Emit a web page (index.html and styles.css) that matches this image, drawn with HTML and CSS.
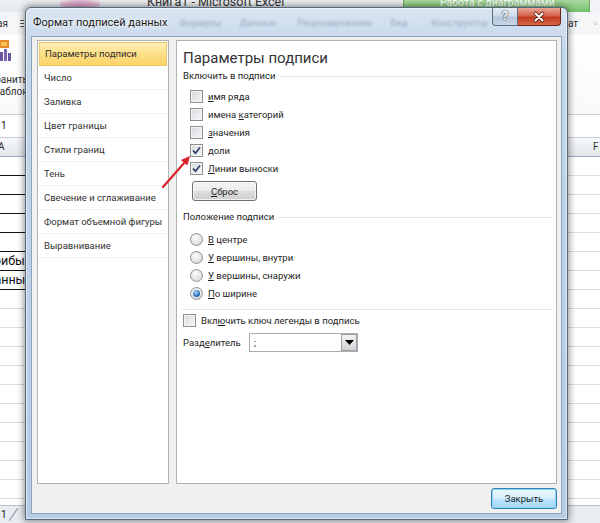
FILE: index.html
```html
<!DOCTYPE html>
<html lang="ru">
<head>
<meta charset="utf-8">
<link rel="stylesheet" href="styles.css">
</head>
<body>
<div class="excel">
  <div class="xl-top">
    <div class="xl-pink"></div>
    <div class="xl-caption"><span>Книга1 - Microsoft Excel</span></div>
    <div class="xl-tools"><span>Работа с диаграммами</span></div>
    <div class="xl-topend"></div>
  </div>
  <div class="row xl-tabs">
    <div class="l tabs-l"><span class="clip-end"><span>Главная</span></span><span class="tab-ico"></span></div>
    <div class="mid"></div>
    <div class="r"><span class="tab-r">ат</span><span class="tab-r2">◦</span></div>
  </div>
  <div class="row xl-ribbon">
    <div class="l rib-l">
      <svg class="rib-ico" width="13" height="22" viewBox="0 0 13 22"><rect x="0" y="0" width="9" height="8" fill="#e8892c"/><rect x="1" y="2" width="6" height="4" fill="#f6c04a"/><rect x="0" y="12" width="3" height="9" fill="#6d52a0"/><rect x="4" y="9" width="3" height="12" fill="#7f63b3"/><rect x="8" y="13" width="3" height="8" fill="#6d52a0"/></svg>
      <span class="rib-t">Сохранить</span>
      <span class="rib-t">как шаблон</span>
    </div>
    <div class="mid"></div>
    <div class="r"></div>
  </div>
  <div class="row xl-formula">
    <div class="l"><span class="nb">1</span></div>
    <div class="mid"></div>
    <div class="r"></div>
  </div>
  <div class="row xl-head">
    <div class="l"><span class="colh">A</span></div>
    <div class="mid"></div>
    <div class="r"><span class="colh-r">F</span></div>
  </div>
  <div class="xl-rows">
    <div class="row cell"><div class="l dark"></div><div class="mid"></div><div class="r"></div></div>
    <div class="row cell"><div class="l dark"></div><div class="mid"></div><div class="r"></div></div>
    <div class="row cell"><div class="l dark"></div><div class="mid"></div><div class="r"></div></div>
    <div class="row cell"><div class="l dark"></div><div class="mid"></div><div class="r"></div></div>
    <div class="row cell"><div class="l dark"></div><div class="mid"></div><div class="r"></div></div>
    <div class="row cell"><div class="l dark"><span class="ct ct1">Прибыль</span></div><div class="mid"></div><div class="r"></div></div>
    <div class="row cell"><div class="l dark"><span class="ct ct2">Данные</span></div><div class="mid"></div><div class="r"></div></div>
    <div class="row cell"><div class="l"></div><div class="mid"></div><div class="r"></div></div>
    <div class="row cell"><div class="l"></div><div class="mid"></div><div class="r"></div></div>
    <div class="row cell"><div class="l"></div><div class="mid"></div><div class="r"></div></div>
    <div class="row cell"><div class="l"></div><div class="mid"></div><div class="r"></div></div>
    <div class="row cell"><div class="l"></div><div class="mid"></div><div class="r"></div></div>
    <div class="row cell"><div class="l"></div><div class="mid"></div><div class="r"></div></div>
    <div class="row cell"><div class="l"></div><div class="mid"></div><div class="r"></div></div>
    <div class="row cell"><div class="l"></div><div class="mid"></div><div class="r"></div></div>
    <div class="row cell"><div class="l"></div><div class="mid"></div><div class="r"></div></div>
    <div class="row cell"><div class="l"></div><div class="mid"></div><div class="r"></div></div>
    <div class="row cell"><div class="l"></div><div class="mid"></div><div class="r"></div></div>
    <div class="row cell"><div class="l"></div><div class="mid"></div><div class="r"></div></div>
  </div>
  <div class="row xl-sheets">
    <div class="l sheet-l"><span class="sh">1</span><span class="sh-slash"></span></div>
    <div class="mid"></div>
    <div class="r"></div>
  </div>
</div>

<div class="dlg">
  <div class="titlebar">
    <span class="title">Формат подписей данных</span>
    <span class="glass">
      <span class="g1">Формулы</span>
      <span class="g2">Данные</span>
      <span class="g3">Рецензирование</span>
      <span class="g4">Вид</span>
      <span class="g5">Конструктор</span>
    </span>
    <span class="capbtns">
      <span class="help">?</span>
      <span class="close"><svg width="14" height="12" viewBox="0 0 14 12"><path d="M3.5 2.5 L10.5 9.5 M10.5 2.5 L3.5 9.5" stroke="#5a1d12" stroke-width="3.6" stroke-linecap="round"/><path d="M3.5 2.5 L10.5 9.5 M10.5 2.5 L3.5 9.5" stroke="#ffffff" stroke-width="2" stroke-linecap="round"/></svg></span>
    </span>
  </div>
  <div class="client">
    <div class="panels">
      <ul class="nav">
        <li class="sel">Параметры подписи</li>
        <li>Число</li>
        <li>Заливка</li>
        <li>Цвет границы</li>
        <li>Стили границ</li>
        <li>Тень</li>
        <li>Свечение и сглаживание</li>
        <li>Формат объемной фигуры</li>
        <li>Выравнивание</li>
      </ul>
      <div class="pane">
        <h1 class="heading">Параметры подписи</h1>
        <div class="group">Включить в подписи</div>
        <div class="opts">
          <label class="opt"><span class="cb"></span><span><u>и</u>мя ряда</span></label>
          <label class="opt"><span class="cb"></span><span>имена <u>к</u>атегорий</span></label>
          <label class="opt"><span class="cb"></span><span><u>з</u>начения</span></label>
          <label class="opt"><span class="cb"><svg width="11" height="11" viewBox="0 0 11 11"><path d="M2 5.5 L4.5 8.2 L9 2.5" fill="none" stroke="#283f6a" stroke-width="1.7"/></svg></span><span>доли</span></label>
          <label class="opt"><span class="cb"><svg width="11" height="11" viewBox="0 0 11 11"><path d="M2 5.5 L4.5 8.2 L9 2.5" fill="none" stroke="#283f6a" stroke-width="1.7"/></svg></span><span><u>Л</u>инии выноски</span></label>
        </div>
        <button class="btn reset" type="button"><u>С</u>брос</button>
        <div class="group group2">Положение подписи</div>
        <div class="opts radios">
          <label class="opt"><span class="rb"></span><span><u>В</u> центре</span></label>
          <label class="opt"><span class="rb"></span><span><u>У</u> вершины, внутри</span></label>
          <label class="opt"><span class="rb"></span><span><u>У</u> вершины, снаружи</span></label>
          <label class="opt"><span class="rb on"></span><span><u>П</u>о ширине</span></label>
        </div>
        <div class="sep"></div>
        <label class="opt legend"><span class="cb"></span><span>Вкл<u>ю</u>чить ключ легенды в подпись</span></label>
        <div class="delim">
          <span class="delim-l">Разд<u>е</u>литель</span>
          <span class="select"><span class="sel-v">;</span><span class="sel-b"><svg width="9" height="5" viewBox="0 0 9 5"><path d="M0 0 H9 L4.5 5 Z" fill="#000"/></svg></span></span>
        </div>
      </div>
    </div>
    <div class="footer">
      <button class="btn closebtn" type="button">Закрыть</button>
    </div>
  </div>
</div>

<svg class="arrow" width="34" height="38" viewBox="0 0 34 38"><path d="M3 35 L25 10" stroke="#d9232b" stroke-width="2.2" stroke-linecap="round"/><polygon points="30,4 27.4,13.6 20.9,8" fill="#d9232b"/></svg>
</body>
</html>
```

FILE: styles.css
```css
* { box-sizing: border-box; }

body {
  margin: 0;
  width: 600px;
  height: 523px;
  overflow: hidden;
  position: relative;
  background: #fff;
  font-family: Roboto, "Noto Sans", "DejaVu Sans", sans-serif;
  color: #222;
}

/* ---------- Excel background ---------- */
.excel {
  height: 523px;
  display: flex;
  flex-direction: column;
}

.row { display: flex; flex: none; }
.l {
  width: 27px;
  flex: none;
  display: flex;
  overflow: hidden;
  white-space: nowrap;
}
.mid { flex: 1; }
.r {
  width: 32px;
  flex: none;
  overflow: hidden;
  white-space: nowrap;
  position: relative;
}

.xl-top {
  height: 12px;
  flex: none;
  display: flex;
  overflow: hidden;
  background: linear-gradient(#eef0f3, #e4e8ee);
}
.xl-pink {
  width: 40px;
  margin-left: 60px;
  background: radial-gradient(ellipse at center, #d79abf 0%, #e2b3cf 55%, rgba(228,232,238,0) 100%);
}
.xl-caption {
  width: 303px;
  padding-left: 47px;
  font-size: 12.5px;
  color: #333;
  line-height: 12px;
}
.xl-caption span { display: block; margin-top: -4px; }
.xl-tools {
  width: 187px;
  background: linear-gradient(#a9d9a0, #74c06b);
  color: #fff;
  font-size: 10.5px;
  line-height: 12px;
  padding-left: 36px;
  border-left: 1px solid #6aa865;
  border-right: 1px solid #6aa865;
}
.xl-tools span { display: block; margin-top: -3px; }
.xl-topend { flex: 1; background: #f1f3f6; }

.xl-tabs {
  height: 23px;
  background: #f5f6f8;
  font-size: 10px;
  color: #333;
}
.tabs-l { align-items: center; }
.clip-end {
  width: 8px;
  display: flex;
  justify-content: flex-end;
  overflow: hidden;
}
.tab-ico {
  width: 4px;
  height: 7px;
  margin-left: 12px;
  border-top: 1px solid #555;
  border-bottom: 1px solid #555;
  background: linear-gradient(#fff 40%, #555 40%, #555 60%, #fff 60%);
}
.tab-r { display: inline-block; margin-left: 0; line-height: 23px; }
.tab-r2 { display: inline-block; margin-left: 14px; line-height: 23px; color: #666; }

.xl-ribbon {
  height: 80px;
  background: linear-gradient(#ffffff, #f7f9fb);
  border-bottom: 1px solid #c6d0db;
  font-size: 10px;
  color: #333;
}
.rib-l {
  flex-direction: column;
  align-items: flex-end;
  padding-top: 5px;
}
.rib-ico { align-self: flex-start; margin-bottom: 12px; }
.rib-t { line-height: 12px; margin-right: -1px; }

.xl-formula {
  height: 23px;
  border-bottom: 1px solid #c9cfd7;
  font-size: 10px;
  color: #222;
}
.nb { line-height: 22px; padding-left: 1px; }

.xl-head {
  height: 19px;
  background: linear-gradient(#f6f7f9, #e2e6eb);
  border-bottom: 1px solid #9eb0c4;
  font-size: 10px;
  color: #333;
}
.colh { line-height: 18px; margin-left: -2px; }
.colh-r { display: block; line-height: 18px; padding-left: 25px; }

.xl-rows {
  flex: 1;
  overflow: hidden;
}
.cell { height: 19px; }
.cell .l { border-bottom: 1px solid #dadcdd; }
.cell .l.dark { border-bottom: 1px solid #111; }
.cell .r { border-bottom: 1px solid #dadcdd; }
.ct { font-size: 12.5px; line-height: 18px; color: #111; }
.ct1 { margin-left: -15px; }
.ct2 { margin-left: -15px; }

.xl-sheets {
  height: 18px;
  background: #e9ecf0;
  border-top: 1px solid #b7c0cb;
  font-size: 10px;
}
.sheet-l { align-items: center; }
.sh { padding-left: 1px; }
.sh-slash {
  width: 1px;
  height: 15px;
  margin-left: 6px;
  background: #8c96a3;
  transform: rotate(35deg);
}

/* ---------- Dialog window ---------- */
.dlg {
  position: absolute;
  left: 25px;
  top: 7px;
  width: 543px;
  height: 513px;
  border: 1px solid #56677a;
  border-radius: 6px 6px 0 0;
  background: linear-gradient(#d9e5f2, #c4d6ea 40px, #b5cce6);
  box-shadow: 0 0 7px 1px rgba(0,0,0,0.45), inset 0 0 0 1px rgba(255,255,255,0.55);
  display: flex;
  flex-direction: column;
}

.titlebar {
  height: 29px;
  flex: none;
  display: flex;
  align-items: flex-start;
  padding-left: 7px;
}
.title {
  flex: none;
  font-size: 11px;
  line-height: 29px;
  color: #1a1a1a;
  white-space: nowrap;
  text-shadow: 0 0 6px #fff, 0 0 3px #fff;
}
.glass {
  flex: 1;
  min-width: 0;
  overflow: hidden;
  display: flex;
  font-size: 9.5px;
  line-height: 29px;
  color: rgba(70, 90, 120, 0.4);
  filter: blur(0.9px);
  white-space: nowrap;
}
.g1 { margin-left: 12px; }
.g2 { margin-left: 18px; }
.g3 { margin-left: 22px; }
.g4 { margin-left: 18px; }
.g5 { margin-left: 24px; }
.capbtns {
  flex: none;
  display: flex;
  margin-right: 6px;
}
.help {
  width: 26px;
  height: 18px;
  border: 1px solid #5b6d82;
  border-top: none;
  border-radius: 0 0 0 4px;
  background: linear-gradient(#e6edf5, #cdd9e7 48%, #b4c6da 52%, #c9d7e6);
  color: #fff;
  font-size: 12px;
  font-weight: bold;
  line-height: 17px;
  text-align: center;
  text-shadow: 0 0 2px #2d3e55, 0 0 1px #2d3e55;
}
.close {
  width: 43px;
  height: 18px;
  border: 1px solid #6b2419;
  border-left: none;
  border-top: none;
  border-radius: 0 0 4px 0;
  background: linear-gradient(#eaa796, #d5634c 45%, #c23b22 55%, #d46a45);
  display: flex;
  align-items: center;
  justify-content: center;
}

.client {
  flex: 1;
  margin: 0 6px 6px 6px;
  background: #f0f0f0;
  box-shadow: 0 0 0 1px #8ea3ba;
  display: flex;
  flex-direction: column;
  padding: 3px 4px 3px 5px;
}
.panels {
  height: 444px;
  display: flex;
  gap: 7px;
}

.nav {
  width: 132px;
  flex: none;
  margin: 0;
  padding: 1px 0 0;
  list-style: none;
  background: #fff;
  border: 1px solid #b3b3b3;
  font-size: 9.5px;
  color: #333;
}
.nav li {
  height: 24px;
  line-height: 24px;
  padding-left: 5px;
  margin: 0 1px;
  white-space: nowrap;
  border-bottom: 1px solid #f1f1f1;
}
.nav li.sel {
  background: linear-gradient(#fff1b8, #fde08a 45%, #fcd468 100%);
  border: 1px solid #e9c76a;
  line-height: 22px;
  color: #2d2d2d;
}

.pane {
  flex: 1;
  background: #fff;
  border: 1px solid #b3b3b3;
  padding: 0 5px 0 6px;
  font-size: 9.5px;
  color: #1e1e1e;
}
.heading {
  margin: 6px 0 0;
  font-size: 15px;
  font-weight: normal;
  line-height: 22px;
  color: #333;
  white-space: nowrap;
}
.group {
  display: flex;
  align-items: center;
  line-height: 14px;
  white-space: nowrap;
}
.group::after {
  content: "";
  flex: 1;
  height: 1px;
  margin-left: 5px;
  background: #dfe3e8;
}
.opts {
  margin-top: 4px;
  padding-left: 7px;
}
.opt {
  display: flex;
  align-items: center;
  gap: 5px;
  height: 18px;
  white-space: nowrap;
}
.cb {
  width: 13px;
  height: 13px;
  flex: none;
  border: 1px solid #8e8f8f;
  background: linear-gradient(135deg, #d6d8dc, #f7f7f8);
  box-shadow: inset 0 0 0 1px #f4f4f4;
  display: flex;
  align-items: center;
  justify-content: center;
}
.rb {
  width: 13px;
  height: 13px;
  flex: none;
  border-radius: 50%;
  border: 1px solid #8e8f8f;
  background: radial-gradient(circle at 40% 35%, #fbfbfb, #d9dbde 80%);
  display: flex;
  align-items: center;
  justify-content: center;
}
.rb.on::after {
  content: "";
  width: 7px;
  height: 7px;
  border-radius: 50%;
  background: radial-gradient(circle at 40% 35%, #a9d8ff, #2f6fb5 60%, #17467f);
}
u { text-decoration: underline; text-underline-offset: 1px; }

.btn {
  font-family: inherit;
  font-size: 9.5px;
  color: #1e1e1e;
  border: 1px solid #707070;
  border-radius: 3px;
  background: linear-gradient(#f4f4f4, #ebebeb 48%, #dcdcdc 52%, #cfcfcf);
  box-shadow: inset 0 0 0 1px rgba(255,255,255,0.7);
  padding: 0;
  margin: 0;
}
.reset {
  display: block;
  width: 65px;
  height: 20px;
  margin: 4px 0 0 9px;
}
.group2 { margin-top: 9px; }
.radios { margin-top: 6px; }

.sep {
  height: 1px;
  margin: 7px -2px 0 -1px;
  background: #e3e6ea;
}
.legend { margin-top: 1px; gap: 5px; }

.delim {
  display: flex;
  align-items: center;
  height: 20px;
  margin-top: 3px;
  white-space: nowrap;
}
.delim-l { width: 66px; }
.select {
  width: 109px;
  height: 19px;
  border: 1px solid #abadb3;
  background: #fff;
  display: flex;
  align-items: center;
}
.sel-v { flex: 1; padding-left: 4px; }
.sel-b {
  width: 16px;
  height: 17px;
  border: 1px solid #9a9ea5;
  background: linear-gradient(#f3f3f3, #e2e2e2 50%, #d3d3d3);
  display: flex;
  align-items: center;
  justify-content: center;
}

.footer {
  display: flex;
  justify-content: flex-end;
  padding-top: 4px;
}
.closebtn {
  width: 66px;
  height: 21px;
  border-color: #3c7fb1;
  box-shadow: inset 0 0 0 1px #7fdcf3;
  background: linear-gradient(#eaf6fd, #d9f0fc 48%, #bee6fd 52%, #a7d9f5);
}

.arrow {
  position: absolute;
  left: 160px;
  top: 152px;
}
```
